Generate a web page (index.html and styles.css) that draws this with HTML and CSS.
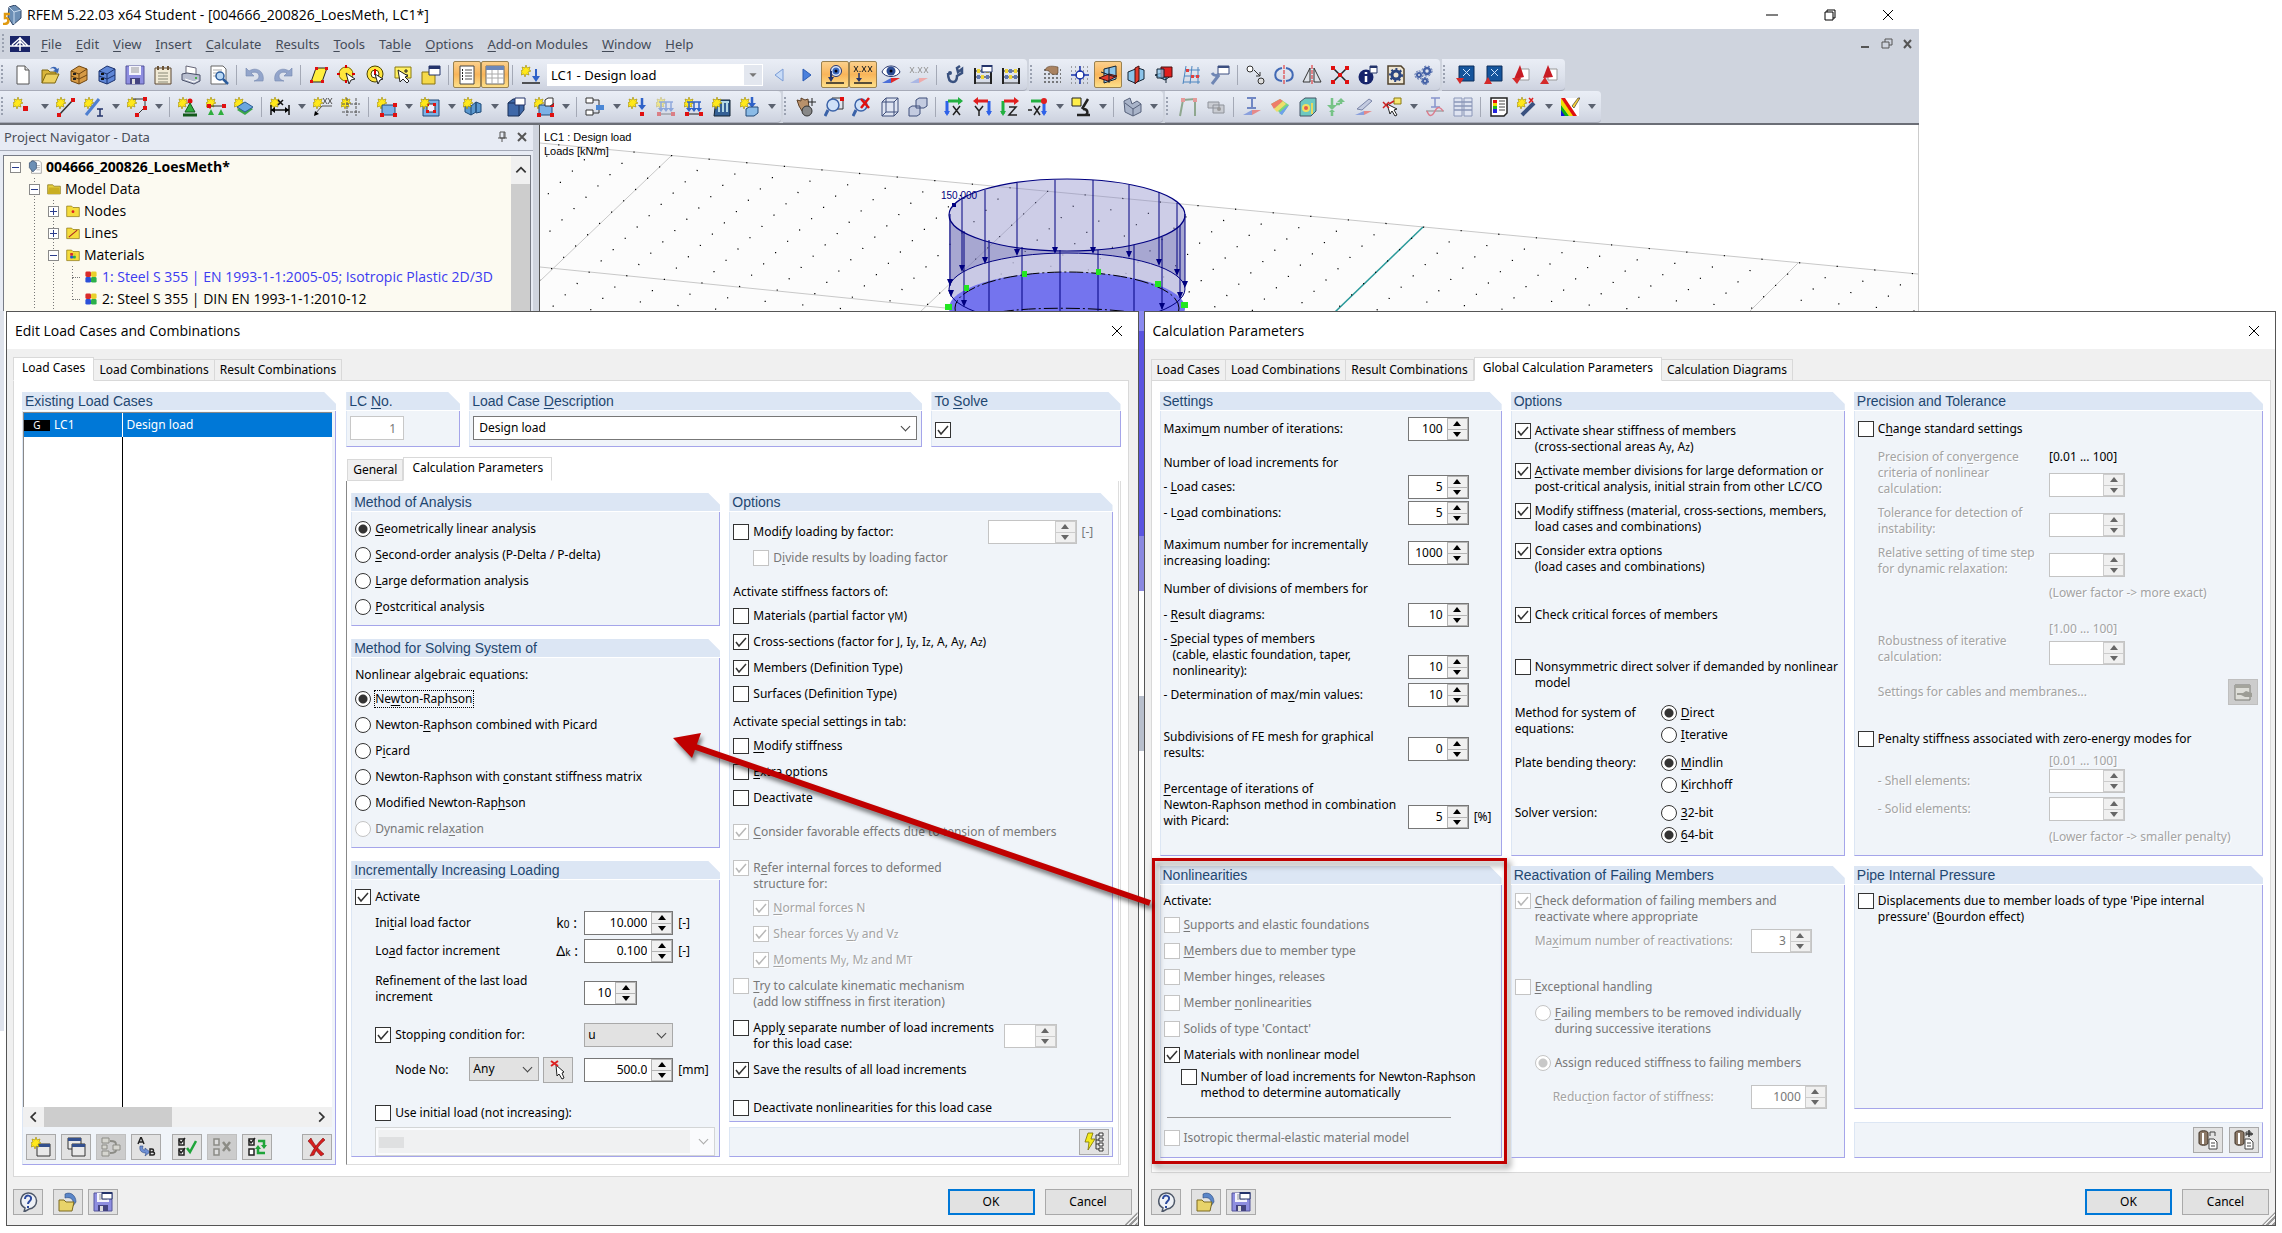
FILE: index.html
```html
<!DOCTYPE html>
<html lang="en">
<head>
<meta charset="utf-8">
<title>RFEM 5.22.03 x64 Student</title>
<link rel="stylesheet" href="styles.css">
</head>
<body>
<svg class="defs" aria-hidden="true">
<symbol id="new" viewBox="0 0 20 20"><path d="M4 1h8l4 4v14H4z" fill="#fff" stroke="#555"/><path d="M12 1v4h4" fill="#ddd" stroke="#555"/></symbol>
<symbol id="open" viewBox="0 0 20 20"><path d="M1 18V5h6l2 2h6v3" fill="#d9b53a" stroke="#7c6410"/><path d="M1 18L5 9h13l-4 9z" fill="#ecd060" stroke="#7c6410"/><path d="M9 4c2-3 6-3 7 0l2-1-1 5-5-2 2-1c-1-2-3-2-5-1z" fill="#3b67b5"/></symbol>
<symbol id="boxo" viewBox="0 0 20 20"><path d="M2 6l8-5 8 3v11l-8 4-8-3z" fill="#d69a45" stroke="#6e4510"/><path d="M2 6l8 3v10M10 9l8-5M2 11l8 3 8-4" fill="none" stroke="#6e4510"/><path d="M4 8h3v2H4zM4 13h3v2H4z" fill="#222"/></symbol>
<symbol id="boxb" viewBox="0 0 20 20"><path d="M2 6l8-5 8 3v11l-8 4-8-3z" fill="#5f86d6" stroke="#1b326e"/><path d="M2 6l8 3v10M10 9l8-5M2 11l8 3 8-4" fill="none" stroke="#1b326e"/><path d="M4 8h3v2H4zM4 13h3v2H4z" fill="#111"/></symbol>
<symbol id="save" viewBox="0 0 20 20"><path d="M1 1h18v18H1z" fill="#8e8ee0" stroke="#55559a"/><path d="M4 1h12v9H4z" fill="#f4f4fc"/><path d="M6 3h8M6 5h8M6 7h8" stroke="#999"/><path d="M5 13h10v6H5z" fill="#444480"/><path d="M7 14h3v5H7z" fill="#ddd"/></symbol>
<symbol id="clip" viewBox="0 0 20 20"><path d="M2 3h16v16H2z" fill="#f1ead6" stroke="#5b4630"/><path d="M4 1h2v4H4zM9 1h2v4H9zM14 1h2v4h-2z" fill="#6b5336"/><path d="M5 8h10M5 11h10M5 14h10M5 17h10" stroke="#887"/></symbol>
<symbol id="print" viewBox="0 0 20 20"><path d="M5 1l10 2v7H5z" fill="#fff" stroke="#667"/><path d="M1 9l5-1 13 2v6l-6 3-12-4z" fill="#b9bfd0" stroke="#4a5068"/><path d="M4 14l9 3 4-2" fill="none" stroke="#fff"/><circle cx="15" cy="13" r="1" fill="#2a2"/></symbol>
<symbol id="prev" viewBox="0 0 20 20"><path d="M2 1h12l3 3v15H2z" fill="#fff" stroke="#666"/><path d="M4 5h9M4 8h5M4 11h4" stroke="#aaa"/><circle cx="11" cy="11" r="4" fill="#b9d8f5" stroke="#2b5c9c" stroke-width="1.5"/><path d="M14 14l5 5" stroke="#2b5c9c" stroke-width="2.5"/></symbol>
<symbol id="undo" viewBox="0 0 20 20"><path d="M1 3v8h8L6 8c4-2 8 0 8 3 0 3-2 4-5 5h9c2-9-6-15-14-10z" fill="#93a5cb" stroke="#7486ae" stroke-width=".6"/></symbol>
<symbol id="redo" viewBox="0 0 20 20"><path d="M19 3v8h-8l3-3c-4-2-8 0-8 3 0 3 2 4 5 5H2C0 7 8 1 16 6z" fill="#93a5cb" stroke="#7486ae" stroke-width=".6"/></symbol>
<symbol id="rhomb" viewBox="0 0 20 20"><path d="M7 3h11l-5 14H2z" fill="#ffef3d" stroke="#222"/><path d="M6 2h3v3H6zM16 2h3v3h-3zM12 15h3v3h-3zM1 15h3v3H1z" fill="#e01010"/></symbol>
<symbol id="circ" viewBox="0 0 20 20"><circle cx="9" cy="9" r="7" fill="#ffe63d" stroke="#7a6b00"/><path d="M9 0v3M9 15v3M0 9h3M15 9h3" stroke="#d00" stroke-width="2"/><path d="M9 8l3 11 2-4 4-1z" fill="#fff" stroke="#222"/></symbol>
<symbol id="ring" viewBox="0 0 20 20"><circle cx="10" cy="9" r="8" fill="#ffe63d" stroke="#4a4200"/><circle cx="10" cy="9" r="4" fill="#fff" stroke="#4a4200"/><path d="M10 4v6" stroke="#d00" stroke-width="2"/><path d="M10 9l3 10 2-4 3-1z" fill="#fff" stroke="#222"/></symbol>
<symbol id="sel" viewBox="0 0 20 20"><path d="M2 2h16v11H2z" fill="#fff063" stroke="#8a7a10"/><path d="M13 4v4M11 6h4M11 10h4" stroke="#222"/><path d="M5 5l2 12 3-3 4 4 2-2-4-4 3-1z" fill="#fff" stroke="#222"/></symbol>
<symbol id="note" viewBox="0 0 20 20"><path d="M1 7h13v12H1z" fill="#f5d94a" stroke="#8a7410"/><path d="M8 1h11v9H8z" fill="#fff" stroke="#24346b"/><path d="M8 1h11v3H8z" fill="#24346b"/></symbol>
<symbol id="list" viewBox="0 0 20 20"><path d="M3 1h14v18H3z" fill="#fff" stroke="#444"/><path d="M5 5h1M5 8h1M5 11h1M5 14h1" stroke="#222" stroke-width="2"/><path d="M8 5h7M8 8h7M8 11h7M8 14h7" stroke="#555"/></symbol>
<symbol id="table" viewBox="0 0 20 20"><path d="M1 1h18v18H1z" fill="#fff" stroke="#666"/><path d="M1 1h18v4H1z" fill="#6b87b9"/><path d="M1 9h18M1 13h18M7 5v14M13 5v14" stroke="#aaa"/></symbol>
<symbol id="star" viewBox="0 0 20 20"><path d="M5 0l1 3 3-1-1 3 2 1-3 1 1 3-3-1-1 3-1-3-3 1 1-3-2-1 3-1-1-3 3 1z" fill="#ffe81a" stroke="#a08a00" stroke-width=".6"/></symbol>
<symbol id="sload" viewBox="0 0 20 20"><use href="#star"/><path d="M15 4v9" stroke="#2f62c8" stroke-width="2"/><path d="M11 11h8l-4 6z" fill="#2f62c8"/><path d="M1 18h18" stroke="#222" stroke-width="1.5"/></symbol>
<symbol id="left" viewBox="0 0 20 20"><path d="M14 4v12L6 10z" fill="#c9dcf7" stroke="#7a9cd6"/></symbol>
<symbol id="right" viewBox="0 0 20 20"><path d="M6 4v12l8-6z" fill="#4a80dd" stroke="#2a5bb4"/></symbol>
<symbol id="eyel" viewBox="0 0 20 20"><circle cx="11" cy="6" r="5.500" fill="#dfe8fa" stroke="#24346b"/><circle cx="11" cy="6" r="3.500" fill="#3a68bf"/><circle cx="11" cy="6" r="1.500" fill="#001"/><path d="M6 6v9" stroke="#24346b" stroke-width="2"/><path d="M3 12h6l-3 5z" fill="#24346b"/><path d="M1 18h18" stroke="#222" stroke-width="1.5"/></symbol>
<symbol id="xxx" viewBox="0 0 20 20"><path d="M1 1l4 6M5 1L1 7M9 1l4 6M13 1L9 7M15 1l4 6M19 1l-4 6M7 6v1" stroke="#222" fill="none"/><path d="M6 8v7" stroke="#24346b" stroke-width="1.5"/><path d="M3 13h6l-3 4z" fill="#24346b"/><path d="M1 18h18" stroke="#222" stroke-width="1.5"/></symbol>
<symbol id="eyer" viewBox="0 0 20 20"><path d="M1 7c3-8 15-8 18 0-3 6-15 6-18 0z" fill="#fff" stroke="#24346b"/><circle cx="10" cy="6" r="4.5" fill="#2c4c94"/><circle cx="10" cy="6" r="1.5" fill="#001"/><path d="M1 18l9-5v5z" fill="#4b6fd8"/><path d="M10 13h9l-9 5z" fill="#e02a2a"/></symbol>
<symbol id="xxr" viewBox="0 0 20 20"><path d="M1 2l4 6M5 2L1 8M9 2l4 6M13 2L9 8M15 2l4 6M19 2l-4 6M7 7v1" stroke="#999" fill="none"/><path d="M1 18l9-5v5z" fill="#aab7e4"/><path d="M10 13h9l-9 5z" fill="#eeaaaa"/></symbol>
<symbol id="wrench" viewBox="0 0 20 20"><path d="M3 8c0 6 2 9 5 9s4-3 4-6l5-3V4l-4 3-1-4 3-2" fill="none" stroke="#39517f" stroke-width="2.5"/><circle cx="5" cy="8" r="2" fill="#39517f"/></symbol>
<symbol id="abac" viewBox="0 0 20 20"><path d="M2 3v16M18 3v16" stroke="#222" stroke-width="2"/><path d="M2 6h16M2 12h16M2 18h16" stroke="#222"/><path d="M4 4h3v4H4zM13 4h3v4h-3zM8 10h3v4H8z" fill="#f0d637"/><path d="M8 4h3v4H8zM4 10h3v4H4zM13 10h3v4h-3z" fill="#6078b0"/></symbol>
<symbol id="abacw" viewBox="0 0 20 20"><use href="#abac"/><path d="M9 0h10v7H9z" fill="#fff" stroke="#24346b"/><path d="M9 0h10v2H9z" fill="#24346b"/></symbol>
<symbol id="grid" viewBox="0 0 20 20"><path d="M2 5h17M2 9h17M2 13h17M2 17h17" stroke="#555" stroke-width="1.5" stroke-dasharray="2 2"/><path d="M3 5c2-5 8-4 13-3v6c-3 3-8 1-9-2z" fill="#a98260" stroke="#5d4128" stroke-width=".6"/></symbol>
<symbol id="snap" viewBox="0 0 20 20"><path d="M1 2h18M1 6h18M1 14h18M1 18h18" stroke="#555" stroke-dasharray="1 3"/><circle cx="10" cy="10" r="4" fill="#fff" stroke="#1732a8" stroke-width="1.5"/><path d="M10 1v6M10 13v6M1 10h6M13 10h6" stroke="#1732a8" stroke-width="1.5"/></symbol>
<symbol id="plane" viewBox="0 0 20 20"><path d="M6 4l12-3v13l-12 4z" fill="#8cc4ea" stroke="#123"/><path d="M1 13l10-4 8 2-9 5z" fill="#e23b2c" stroke="#411"/><path d="M11 3v15M3 7l14 5" stroke="#123"/></symbol>
<symbol id="plane2" viewBox="0 0 20 20"><path d="M2 7l10-4 6 2v9l-9 4-7-3z" fill="#8cc4ea" stroke="#123"/><path d="M9 3l4-2v14l-4 4z" fill="#e23b2c" stroke="#411"/></symbol>
<symbol id="plane3" viewBox="0 0 20 20"><path d="M1 10l7-2 10 2-7 5z" fill="#8cc4ea" stroke="#123"/><path d="M7 2h11v10H7z" fill="#e01f1f" stroke="#411"/><path d="M12 12v6M3 4h7v9H3z" stroke="#123" fill="#8cc4ea" fill-opacity=".7"/></symbol>
<symbol id="bgrid" viewBox="0 0 20 20"><path d="M4 1L1 19M10 1L8 19M16 2v17M3 5h15M2 11h16M1 17h17" stroke="#4d86c0" fill="none"/><path d="M9 10h3v3H9zM4 4h3v3H4zM14 10h3v3h-3z" fill="#e04040"/></symbol>
<symbol id="tool" viewBox="0 0 20 20"><path d="M8 1h11v8H8z" fill="#fff" stroke="#3c4f80"/><path d="M8 1h11v2H8z" fill="#3c4f80"/><path d="M2 19l7-9M2 8c2 3 5 3 7 1" stroke="#6f86b4" stroke-width="3" fill="none"/></symbol>
<symbol id="nodes" viewBox="0 0 20 20"><circle cx="4" cy="4" r="3" fill="#fff" stroke="#333"/><circle cx="15" cy="16" r="3" fill="#ddd" stroke="#333"/><path d="M8 5l6 6M14 7v4h-4" stroke="#333" fill="none"/></symbol>
<symbol id="rot" viewBox="0 0 20 20"><path d="M8 3c-9 2-9 12 0 13M12 3c9 2 9 12 0 13" fill="none" stroke="#4169b5" stroke-width="2"/><path d="M10 0v20" stroke="#e02020" stroke-dasharray="4 1"/></symbol>
<symbol id="mirror" viewBox="0 0 20 20"><path d="M8 3v14H1zM12 3v14h7z" fill="#dfe3ea" stroke="#333"/><path d="M10 0v20" stroke="#e02020" stroke-dasharray="4 1"/></symbol>
<symbol id="cross" viewBox="0 0 20 20"><path d="M3 3l14 14M17 3L3 17" stroke="#222" stroke-width="1.5"/><path d="M1 1h4v4H1zM15 1h4v4h-4zM1 15h4v4H1zM15 15h4v4h-4zM8 8h4v4H8z" fill="#e01010"/></symbol>
<symbol id="info" viewBox="0 0 20 20"><circle cx="8" cy="12" r="7.5" fill="#16246b"/><path d="M8 7v2M8 11v6" stroke="#fff" stroke-width="2.5"/><path d="M12 1h7v7h-7z" fill="#fff" stroke="#24346b"/><path d="M12 1h7v2h-7z" fill="#24346b"/></symbol>
<symbol id="gearp" viewBox="0 0 20 20"><path d="M2 1h13l3 3v15H2z" fill="#efe6d2" stroke="#4f412c" stroke-width="1.5"/><circle cx="10" cy="10" r="4" fill="none" stroke="#2b4580" stroke-width="3"/><circle cx="10" cy="10" r="6" fill="none" stroke="#2b4580" stroke-width="2" stroke-dasharray="2 2.5"/></symbol>
<symbol id="gears" viewBox="0 0 20 20"><g fill="none" stroke="#4461a6"><circle cx="13" cy="6" r="3" stroke-width="2.5"/><circle cx="13" cy="6" r="5" stroke-dasharray="2 2"/><circle cx="5" cy="10" r="2" stroke-width="2"/><circle cx="5" cy="10" r="4" stroke-dasharray="2 1"/><circle cx="11" cy="16" r="2" stroke-width="2"/><circle cx="11" cy="16" r="3.5" stroke-dasharray="2 1"/></g></symbol>
<symbol id="bluex" viewBox="0 0 20 20"><path d="M4 1h15v15H4z" fill="#15559c" stroke="#0c2f5c"/><path d="M8 4l7 7M15 4l-7 7" stroke="#cfe4ff"/><path d="M1 13h8l-4 6z" fill="#d42a2a"/></symbol>
<symbol id="bluey" viewBox="0 0 20 20"><path d="M4 1h15v15H4z" fill="#15559c" stroke="#0c2f5c"/><path d="M8 4l7 7M15 4l-7 7" stroke="#cfe4ff"/><path d="M1 19h8l-4-7z" fill="#d42a2a"/></symbol>
<symbol id="redx" viewBox="0 0 20 20"><path d="M9 4h9v11H9z" fill="#fff" stroke="#999"/><path d="M3 14L9 0l4 12-9 2z" fill="#c81c24"/><path d="M1 13h9l-4 6z" fill="#d42a2a"/></symbol>
<symbol id="redy" viewBox="0 0 20 20"><path d="M9 4h9v11H9z" fill="#fff" stroke="#999"/><path d="M4 13L9 0l5 12z" fill="#c81c24"/><path d="M1 19h9l-4-7z" fill="#d42a2a"/></symbol>
<symbol id="snode" viewBox="0 0 20 20"><use href="#star"/><path d="M10 9h5v5h-5z" fill="#e01010"/></symbol>
<symbol id="sline" viewBox="0 0 20 20"><use href="#star"/><path d="M3 18L17 3" stroke="#333" stroke-width="1.5"/><path d="M1 16h4v4H1zM15 1h4v4h-4z" fill="#e01010"/></symbol>
<symbol id="smemb" viewBox="0 0 20 20"><use href="#star"/><path d="M2 18L15 2" stroke="#4f7fd0" stroke-width="3"/><path d="M13 12h6M16 12v7M13 19h6" stroke="#24346b" stroke-width="1.5"/></symbol>
<symbol id="spoly" viewBox="0 0 20 20"><use href="#star"/><path d="M6 2h12v8l-8 8" fill="none" stroke="#333"/><path d="M16 0h4v4h-4zM16 9h4v4h-4zM8 16h4v4H8z" fill="#e01010"/></symbol>
<symbol id="ssup" viewBox="0 0 20 20"><use href="#star"/><circle cx="12" cy="4" r="2.5" fill="#e01010"/><path d="M12 6l5 9H7z" fill="#2fae3e" stroke="#145a1c"/><path d="M5 18h14" stroke="#145a1c" stroke-width="3"/></symbol>
<symbol id="slsup" viewBox="0 0 20 20"><use href="#star"/><path d="M3 9h15" stroke="#333"/><path d="M1 7h4v4H1zM16 7h4v4h-4z" fill="#e01010"/><path d="M5 12l3 6H2zM15 12l3 6h-6z" fill="#2fae3e"/></symbol>
<symbol id="ssurf" viewBox="0 0 20 20"><use href="#star"/><path d="M3 13l8-6 8 5-8 6z" fill="#3aa648"/><path d="M3 10l8-5 8 5-8 5z" fill="#6ba6de" stroke="#2c5f96"/></symbol>
<symbol id="dim" viewBox="0 0 20 20"><use href="#star"/><path d="M1 8v10M19 8v10M1 13h18" stroke="#111" stroke-width="1.5"/><path d="M1 13l4-3v6zM19 13l-4-3v6z"/><path d="M8 3l5 5M13 3L8 8" stroke="#111" stroke-width="1.5"/></symbol>
<symbol id="cmt" viewBox="0 0 20 20"><use href="#star"/><path d="M2 17l7-8h10M10 1l4 6M14 1l-4 6M15 1l4 6M19 1l-4 6" stroke="#555" fill="none"/><path d="M1 19l1-5 4 3z"/></symbol>
<symbol id="hash" viewBox="0 0 20 20"><use href="#star"/><path d="M6 1v18M15 1v18M1 7h18M1 15h18" stroke="#555" stroke-dasharray="3 1"/></symbol>
<symbol id="srect" viewBox="0 0 20 20"><use href="#star"/><path d="M5 8h13v10H5z" fill="#7db2e6" stroke="#234a78"/><path d="M3 16h4v4H3zM16 16h4v4h-4zM16 6h4v4h-4z" fill="#e01010"/></symbol>
<symbol id="sopen" viewBox="0 0 20 20"><path d="M3 3h16v16H3z" fill="#7db2e6" stroke="#234a78"/><path d="M7 7h8v8H7z" fill="#eef" stroke="#333"/><path d="M6 6h3v3H6zM13 6h3v3h-3zM6 13h3v3H6zM13 13h3v3h-3z" fill="#e01010"/><use href="#star"/></symbol>
<symbol id="scyl" viewBox="0 0 20 20"><path d="M2 7l6 2v9l-6-3zM8 9l5-4v10l-5 3M13 5l5 2v8l-5 1z" fill="#5b98cf" stroke="#1f4b78"/><use href="#star"/></symbol>
<symbol id="cube" viewBox="0 0 20 20"><path d="M2 6l5-4h11v11l-5 6H2z" fill="#3f68a8" stroke="#182f57"/><path d="M2 6h11v13M13 6l5-4" fill="none" stroke="#182f57"/><path d="M9 1h10v7H9z" fill="#fff" stroke="#24346b"/></symbol>
<symbol id="cubes" viewBox="0 0 20 20"><use href="#srect"/><path d="M11 3l3-2h5v6l-3 2h-5z" fill="#fff" stroke="#333"/></symbol>
<symbol id="flow" viewBox="0 0 20 20"><path d="M1 1h7v5H1zM1 13h7v5H1z" fill="#fff" stroke="#333"/><path d="M8 3h6v5M8 16h6v-4" fill="none" stroke="#333"/><path d="M11 8h8v5h-8z" fill="#4a87d6"/></symbol>
<symbol id="nload" viewBox="0 0 20 20"><use href="#star"/><path d="M14 1v9" stroke="#2f62c8" stroke-width="2.5"/><path d="M10 8h8l-4 5z" fill="#2f62c8"/><path d="M12 15h4v4h-4z" fill="#e01010"/></symbol>
<symbol id="mload" viewBox="0 0 20 20"><use href="#star"/><path d="M3 5h14M5 5v7M10 5v7M15 5v7" stroke="#2f62c8" stroke-width="1.5"/><path d="M2 11h6l-3 4zM7 11h6l-3 4zM12 11h6l-3 4z" fill="#2f62c8"/><path d="M2 17h16" stroke="#222"/><path d="M1 15h4v4H1zM15 15h4v4h-4z" fill="#e01010"/></symbol>
<symbol id="sload2" viewBox="0 0 20 20"><path d="M4 3h14v16H2z" fill="#356196" stroke="#123"/><path d="M7 6v9M11 6v9M15 6v9M5 5h12" stroke="#dff" stroke-width="1.5"/><use href="#star"/></symbol>
<symbol id="vload" viewBox="0 0 20 20"><use href="#star"/><path d="M12 0v7" stroke="#2f62c8" stroke-width="2.5"/><path d="M8 6h8l-4 5z" fill="#2f62c8"/><path d="M6 12l3-2h9v6l-4 3H6z" fill="#8bbbe6" stroke="#234a78"/></symbol>
<symbol id="hand" viewBox="0 0 20 20"><path d="M3 9l-2-6 4 1V1l4 2 3-1 1 9-3 3H6z" fill="#b9916b" stroke="#5d4128"/><circle cx="11" cy="14" r="5" fill="#888" stroke="#333"/><path d="M16 1v8M12 5h8" stroke="#222"/></symbol>
<symbol id="zoomw" viewBox="0 0 20 20"><path d="M8 1h11v11H8z" fill="none" stroke="#333"/><circle cx="9" cy="8" r="6" fill="#cfe1f8" stroke="#3a62a8" stroke-width="1.5"/><path d="M4 13l-3 6" stroke="#3a62a8" stroke-width="3"/><path d="M16 0h4v4h-4z" fill="#e01010"/></symbol>
<symbol id="zoomx" viewBox="0 0 20 20"><circle cx="9" cy="8" r="6" fill="#cfe1f8" stroke="#3a62a8" stroke-width="1.5"/><path d="M4 13l-3 6" stroke="#3a62a8" stroke-width="3"/><path d="M9 2l8 9M17 1l-8 10" stroke="#e01010" stroke-width="2.5"/></symbol>
<symbol id="wire" viewBox="0 0 20 20"><path d="M2 5l4-4h12v14l-4 4H2z" fill="#dfe5f2" stroke="#3f4f7a"/><path d="M2 5h12v14M14 5l4-4M6 1v14h12M2 19l4-4" fill="none" stroke="#3f4f7a"/></symbol>
<symbol id="wire2" viewBox="0 0 20 20"><path d="M8 3l3-2h8v8l-3 2H8zM1 11l3-2h8v8l-3 2H1z" fill="#c3cbe0" stroke="#3f4f7a"/></symbol>
<symbol id="vx" viewBox="0 0 20 20"><path d="M3 4v13" stroke="#2f62e8" stroke-width="3"/><path d="M4 4h13" stroke="#22b040" stroke-width="3"/><path d="M14 0l5 4-5 4z" fill="#22b040"/><path d="M0 14h6l-3 5z" fill="#2f62e8"/><path d="M9 9l7 9M16 9l-7 9" stroke="#222" stroke-width="1.5"/></symbol>
<symbol id="vy" viewBox="0 0 20 20"><path d="M17 4v13" stroke="#2f62e8" stroke-width="3"/><path d="M3 4h13" stroke="#e01f1f" stroke-width="3"/><path d="M6 0L1 4l5 4z" fill="#e01f1f"/><path d="M14 14h6l-3 5z" fill="#2f62e8"/><path d="M3 9l4 5 4-5M7 14v5" stroke="#222" stroke-width="1.5" fill="none"/></symbol>
<symbol id="vz" viewBox="0 0 20 20"><path d="M3 4v13" stroke="#22b040" stroke-width="3"/><path d="M4 4h13" stroke="#e01f1f" stroke-width="3"/><path d="M14 0l5 4-5 4z" fill="#e01f1f"/><path d="M0 14h6l-3 5z" fill="#22b040"/><path d="M9 10h7l-7 8h8" stroke="#222" stroke-width="1.5" fill="none"/></symbol>
<symbol id="vmx" viewBox="0 0 20 20"><path d="M16 4v13" stroke="#2f62e8" stroke-width="3"/><path d="M3 4h12" stroke="#22b040" stroke-width="3"/><path d="M13 14h6l-3 5z" fill="#2f62e8"/><circle cx="16" cy="4" r="3" fill="#e01f1f"/><path d="M6 9l6 9M12 9l-6 9M0 13h4" stroke="#222" stroke-width="1.5"/></symbol>
<symbol id="mic" viewBox="0 0 20 20"><path d="M1 1h9v8H1z" fill="#ffee4a" stroke="#222"/><path d="M17 2l-6 10M6 18h13M12 12c6 0 5 6 2 6" stroke="#222" stroke-width="2.5" fill="none"/></symbol>
<symbol id="solid" viewBox="0 0 20 20"><path d="M2 4l6-3 2 6 5-3 4 3v8l-8 4-8-4z" fill="#a9b4c9" stroke="#56617a"/><path d="M3 6l8 6v7M11 12l8-5" fill="none" stroke="#56617a"/></symbol>
<symbol id="frame" viewBox="0 0 20 20"><path d="M2 19L5 3l12-1v17" fill="none" stroke="#8fa78f" stroke-width="2"/><path d="M3 1h4v4H3zM15 1h4v4h-4z" fill="#e59a9a"/></symbol>
<symbol id="camera" viewBox="0 0 20 20"><path d="M2 5h11v6H2zM7 8h11v8H7z" fill="#c9ccd2" stroke="#8e929a"/><circle cx="13" cy="12" r="2" fill="#999"/></symbol>
<symbol id="ires" viewBox="0 0 20 20"><path d="M5 1h9M10 1v10M5 11h9" stroke="#7087c4" stroke-width="2"/><path d="M1 18l9-5v5z" fill="#8aa0dd"/><path d="M10 13h9l-9 5z" fill="#e58a8a"/></symbol>
<symbol id="rain" viewBox="0 0 20 20"><path d="M1 7l9-5 9 6-7 10z" fill="#79d67c"/><path d="M1 7l9-5 3 2-9 8z" fill="#ef7c68"/><path d="M4 12l9-8 3 3-9 8z" fill="#eede6a"/><path d="M9 16l8-7 2-1-7 10z" fill="#6da0ee"/></symbol>
<symbol id="rcube" viewBox="0 0 20 20"><path d="M2 5l5-4h11v13l-5 5H2z" fill="#6ec9c0" stroke="#456"/><circle cx="8" cy="11" r="4" fill="#f0e060"/><circle cx="8" cy="11" r="2" fill="#e75b4a"/><path d="M14 6v11" stroke="#e8d860" stroke-width="2"/></symbol>
<symbol id="garr" viewBox="0 0 20 20"><path d="M6 1v10M15 4v3M10 7h4M6 14v5" stroke="#76c386" stroke-width="2.5"/><path d="M1 8h10l-5 5zM11 5h8l-4-4zM3 15h6l-3-3z" fill="#76c386"/></symbol>
<symbol id="brush" viewBox="0 0 20 20"><path d="M3 12L15 2l3 2L8 13z" fill="#c3cbe0" stroke="#7b86a8"/><path d="M1 18l9-4v4z" fill="#8aa0dd"/><path d="M10 14h8l-8 4z" fill="#e58a8a"/></symbol>
<symbol id="pick" viewBox="0 0 20 20"><path d="M12 1h7v6h-7z" fill="#f7e670" stroke="#8a7a10"/><path d="M5 7l3 10 2-3 3 5 2-1-3-5 3-1z" fill="#fff" stroke="#222"/><path d="M1 5l6 6M7 5l-6 6M7 7l5-3" stroke="#c22" stroke-width="1.5"/></symbol>
<symbol id="wave" viewBox="0 0 20 20"><path d="M6 1h9M10 1v9M6 10h9" stroke="#8794cc" stroke-width="1.5"/><path d="M1 14h18" stroke="#888"/><path d="M2 14c2 6 5 6 8 0s6-3 8 0" stroke="#dc7d8d" fill="none" stroke-width="1.5"/></symbol>
<symbol id="cols" viewBox="0 0 20 20"><path d="M1 1h8v18H1zM11 1h8v18h-8z" fill="#dfe4f1" stroke="#8a96b8"/><path d="M1 5h18M1 9h18M1 13h18" stroke="#8a96b8" stroke-width="1.5"/></symbol>
<symbol id="legend" viewBox="0 0 20 20"><path d="M2 1h16v15l-3 3H2z" fill="#fff" stroke="#222" stroke-width="1.5"/><path d="M4 3h4v3H4z" fill="#e01010"/><path d="M4 6h4v3H4z" fill="#ed0"/><path d="M4 9h4v3H4z" fill="#2b2"/><path d="M4 12h4v4H4z" fill="#22d"/><path d="M10 4h6M10 7h6M10 10h6M10 13h6" stroke="#444"/></symbol>
<symbol id="sbrush" viewBox="0 0 20 20"><use href="#star"/><path d="M5 18L17 6" stroke="#39517f" stroke-width="4"/><path d="M12 1l4 4M16 1l-4 5" stroke="#d22" stroke-width="1.5"/></symbol>
<symbol id="kcol" viewBox="0 0 20 20"><path d="M1 1h18v18H1z" fill="#fff"/><path d="M1 1l13 18H9L1 8z" fill="#ed0"/><path d="M1 8l8 11H1z" fill="#1a1"/><path d="M1 13l4 6H1z" fill="#11d"/><path d="M1 1h4l12 18h-4z" fill="#e01010"/><path d="M12 9l6-8h2l-6 10z" fill="#f6d03a" stroke="#222" stroke-width=".6"/></symbol>
<symbol id="win" viewBox="0 0 20 20"><path d="M6 7h13v12H6z" fill="#e9e9e9" stroke="#333"/><path d="M6 7h13v3H6z" fill="#33508e"/></symbol>
<symbol id="swin" viewBox="0 0 20 20"><use href="#win"/><use href="#star"/></symbol>
<symbol id="wins" viewBox="0 0 20 20"><path d="M2 1h13v11H2z" fill="#e9e9e9" stroke="#333"/><path d="M2 1h13v3H2z" fill="#33508e"/><use href="#win"/></symbol>
<symbol id="gflow" viewBox="0 0 20 20"><path d="M1 1h7v5H1zM1 14h7v5H1zM12 8h7v5h-7zM1 8h5v4H1z" fill="#d6d6d0" stroke="#8c8c86"/><path d="M9 4c5 0 6 1 6 4M9 16c5 0 6-1 6-3" stroke="#8c8c86" fill="none" stroke-width="2"/></symbol>
<symbol id="ab" viewBox="0 0 20 20"><path d="M2 7l3-7 3 7M3 5h4" stroke="#222" fill="none" stroke-width="1.5"/><path d="M4 9c-1 5 2 7 6 7l-1 3 5-4-5-4v2c-2 0-3-1-2-4z" fill="#6f90d4" stroke="#2d4a86" stroke-width=".6"/><path d="M14 12v6h3a1 1 0 0 0 0-3h-3 2a1 1 0 0 0 0-3z" fill="none" stroke="#222" stroke-width="1.5"/></symbol>
<symbol id="chk" viewBox="0 0 20 20"><path d="M2 2h5v6H2zM2 12h5v6H2z" fill="#fff" stroke="#222" stroke-width="1.5"/><path d="M2 3l2 3 4-5M2 13l2 3 4-5" fill="none" stroke="#222" stroke-width="1.5"/><path d="M10 11l3 4 6-11" fill="none" stroke="#1fa53a" stroke-width="2.5"/></symbol>
<symbol id="unchk" viewBox="0 0 20 20"><path d="M2 2h5v6H2zM2 12h5v6H2z" fill="#ddd" stroke="#8c8c86" stroke-width="1.5"/><path d="M11 5l7 9M18 5l-7 9" stroke="#8c8c86" stroke-width="2.5"/></symbol>
<symbol id="inv" viewBox="0 0 20 20"><path d="M2 2h5v6H2zM2 12h5v6H2z" fill="#fff" stroke="#222" stroke-width="1.5"/><path d="M2 3l2 3 4-5" fill="none" stroke="#222" stroke-width="1.5"/><path d="M11 4h6v4M18 16h-7v-4" fill="none" stroke="#1fa53a" stroke-width="2.5"/><path d="M14 8h6l-3 4zM8 12h6l-3-4z" fill="#1fa53a"/></symbol>
<symbol id="del" viewBox="0 0 20 20"><path d="M4 1c2 5 8 12 13 16l-3 2C9 14 5 8 1 4z" fill="#d81e1e" stroke="#7a0d0d" stroke-width=".6"/><path d="M16 1C11 6 6 12 3 19l4-1c2-6 6-11 11-15z" fill="#d81e1e" stroke="#7a0d0d" stroke-width=".6"/></symbol>
<symbol id="help" viewBox="0 0 20 20"><path d="M10 1a8 8 0 0 1 1 16l-5 3 1-4a8 8 0 0 1 3-15z" fill="#eef1f6" stroke="#4d5768" stroke-width="1.5"/><path d="M7 7c0-5 7-4 6 0 0 2-3 2-3 5M10 14v2" fill="none" stroke="#2c4a9e" stroke-width="2"/></symbol>
<symbol id="fold" viewBox="0 0 20 20"><path d="M7 2c6-3 11 2 11 8l-3 4V9c-1-3-4-4-8-3z" fill="#5b86c8" stroke="#2b4a80" stroke-width=".6"/><path d="M1 8h5l2 2h8l-2 9H1z" fill="#e8d36a" stroke="#7c6a20"/></symbol>
<symbol id="savew" viewBox="0 0 20 20"><use href="#save"/><path d="M9 0h10v7H9z" fill="#fff" stroke="#24346b"/><path d="M9 0h10v2H9z" fill="#24346b"/></symbol>
<symbol id="curs" viewBox="0 0 20 20"><path d="M8 5l1 11 2-2 3 5 2-1-2-5 2-1z" fill="#fff" stroke="#222"/><path d="M3 1l7 5M10 1L3 6" stroke="#d22" stroke-width="2"/></symbol>
<symbol id="bolt" viewBox="0 0 20 20"><path d="M4 1h5L7 7h4L4 18l1-8H1z" fill="#f4ea1c" stroke="#7c7400" stroke-width=".8"/><path d="M12 3v14M12 3h3M12 8h3M12 12h3M12 17h3" stroke="#333"/><path d="M15 1h4v3h-4zM15 6h4v3h-4zM15 11h4v3h-4zM15 16h4v3h-4z" fill="#fff" stroke="#333"/></symbol>
<symbol id="gset" viewBox="0 0 20 20"><path d="M2 3h15v15H2z" fill="#deded8" stroke="#7d7d76"/><path d="M2 3h15v3H2z" fill="#a5a59d"/><path d="M4 11h6l3-2 6 2v4h-7l-4-2H4z" fill="#9d9d95"/></symbol>
<symbol id="db1" viewBox="0 0 20 20"><path d="M1 3c0-3 9-3 9 0v10c0 3-9 3-9 0z" fill="#8d7a68" stroke="#3d3024"/><path d="M5 3v11" stroke="#fff" stroke-width="2"/><path d="M11 9h5l3 3v7h-8z" fill="#fff" stroke="#444"/><path d="M13 13h4M13 16h4M12 6V2h5v4" stroke="#444" fill="none"/></symbol>
<symbol id="db2" viewBox="0 0 20 20"><use href="#db1"/><path d="M15 0v7M12 4h7" stroke="#333" stroke-width="1.5"/></symbol>
<symbol id="logo" viewBox="0 0 20 20"><path d="M7 2l6-2 6 5v8l-8 7-5-8z" fill="#6c8fb5" stroke="#33496a"/><path d="M7 2l5 5 7-2M12 7v12" stroke="#c8dbef" fill="none"/><path d="M8 9H3v4c4-1 5 5 0 6H1" stroke="#e09a10" stroke-width="2.5" fill="none"/></symbol>
<symbol id="bridge" viewBox="0 0 20 20"><path d="M0 2h20v16H0z" fill="#1a2568"/><path d="M10 3v14M0 12h20M10 4L2 11M10 4l8 8M10 7l-5 5M10 7l5 5" stroke="#fff" stroke-width="1.5" fill="none"/></symbol>
<symbol id="doc" viewBox="0 0 20 20"><path d="M5 1h11l3 3v15H5z" fill="#fff" stroke="#888"/><path d="M12 8h5M12 11h5M12 14h5" stroke="#999"/><path d="M2 4l5-3 5 3v8l-5 5-5-6z" fill="#6c8fb5" stroke="#33496a"/></symbol>
<symbol id="fy" viewBox="0 0 20 20"><path d="M1 4h7l2 2h9v11H1z" fill="#e5cf3f" stroke="#7c6a10"/><path d="M1 17L3 8h14l2 9z" fill="#c9ae22"/></symbol>
<symbol id="fsq" viewBox="0 0 20 20"><path d="M1 3h7l2 2h9v13H1z" fill="#f5dc3c" stroke="#8a7410"/></symbol>
<symbol id="fnode" viewBox="0 0 20 20"><use href="#fsq"/><circle cx="10" cy="11" r="2" fill="#d22"/></symbol>
<symbol id="fline" viewBox="0 0 20 20"><use href="#fsq"/><path d="M4 16L16 6" stroke="#a22" stroke-width="1.5"/></symbol>
<symbol id="mat" viewBox="0 0 20 20"><rect x="2" y="2" width="8" height="8" rx="2" fill="#d92b2b"/><rect x="10" y="2" width="8" height="8" rx="2" fill="#e9cf2b"/><rect x="2" y="10" width="8" height="8" rx="2" fill="#2b4fd9"/><rect x="10" y="10" width="8" height="8" rx="2" fill="#2bb04a"/></symbol>
<symbol id="fmat" viewBox="0 0 20 20"><use href="#fsq"/><use href="#mat" x="5" y="6" width="10" height="10"/></symbol>
<symbol id="x" viewBox="0 0 12 12"><path d="M1 1l10 10M11 1L1 11" stroke="currentColor" fill="none"/></symbol>
</svg>

<main class="desktop">
<section class="app">
  <header class="appbar">
    <svg class="ic"><use href="#logo"/></svg><span class="apptitle">RFEM 5.22.03 x64 Student - [004666_200826_LoesMeth, LC1*]</span>
    <span class="sys"><button aria-label="Minimize"><svg viewBox="0 0 12 12"><path d="M0 6h12" stroke="#000"/></svg></button><button aria-label="Restore"><svg viewBox="0 0 12 12"><path d="M1 3h8v8H1zM3 3V1h8v8H9" fill="none" stroke="#000"/></svg></button><button aria-label="Close"><svg><use href="#x"/></svg></button></span>
  </header>
  <nav class="menu">
    <i class="grip"></i><svg class="ic"><use href="#bridge"/></svg>
    <a href="#"><u>F</u>ile</a><a href="#"><u>E</u>dit</a><a href="#"><u>V</u>iew</a><a href="#"><u>I</u>nsert</a><a href="#"><u>C</u>alculate</a><a href="#"><u>R</u>esults</a><a href="#"><u>T</u>ools</a><a href="#">Ta<u>b</u>le</a><a href="#"><u>O</u>ptions</a><a href="#"><u>A</u>dd-on Modules</a><a href="#"><u>W</u>indow</a><a href="#"><u>H</u>elp</a>
    <span class="mdi"><svg viewBox="0 0 12 12"><path d="M1 9h8" stroke="#555" stroke-width="2"/></svg><svg viewBox="0 0 12 12"><path d="M1 4h7v6H1zM4 4V1h7v6H8" fill="none" stroke="#555"/></svg><svg viewBox="0 0 12 12"><path d="M2 2l7 8M9 2l-7 8" stroke="#555" stroke-width="2"/></svg></span>
  </nav>
  <div class="bars">
  <div class="bar">
    <div class="seg"><i class="grip"></i>
      <button class="ib"><svg><use href="#new"/></svg></button><button class="ib"><svg><use href="#open"/></svg></button><button class="ib"><svg><use href="#boxo"/></svg></button><button class="ib"><svg><use href="#boxb"/></svg></button><button class="ib"><svg><use href="#save"/></svg></button><button class="ib"><svg><use href="#clip"/></svg></button><button class="ib"><svg><use href="#print"/></svg></button><button class="ib"><svg><use href="#prev"/></svg></button><i class="sep"></i><button class="ib"><svg><use href="#undo"/></svg></button><button class="ib"><svg><use href="#redo"/></svg></button><i class="sep"></i><button class="ib"><svg><use href="#rhomb"/></svg></button><button class="ib"><svg><use href="#circ"/></svg></button><button class="ib"><svg><use href="#ring"/></svg></button><button class="ib"><svg><use href="#sel"/></svg></button><button class="ib"><svg><use href="#note"/></svg></button><i class="sep"></i><button class="ib on"><svg><use href="#list"/></svg></button><button class="ib on"><svg><use href="#table"/></svg></button><i class="sep"></i><button class="ib"><svg><use href="#sload"/></svg></button>
      <span class="lcbox"><select aria-label="Load case"><option>LC1 - Design load</option></select></span>
      <button class="ib"><svg><use href="#left"/></svg></button><button class="ib"><svg><use href="#right"/></svg></button><button class="ib on"><svg><use href="#eyel"/></svg></button><button class="ib on"><svg><use href="#xxx"/></svg></button><button class="ib"><svg><use href="#eyer"/></svg></button><button class="ib"><svg><use href="#xxr"/></svg></button><i class="sep"></i><button class="ib"><svg><use href="#wrench"/></svg></button><button class="ib"><svg><use href="#abacw"/></svg></button><button class="ib"><svg><use href="#abac"/></svg></button>
    </div>
    <div class="seg"><i class="grip"></i>
      <button class="ib"><svg><use href="#grid"/></svg></button><button class="ib"><svg><use href="#snap"/></svg></button><button class="ib on"><svg><use href="#plane"/></svg></button><button class="ib"><svg><use href="#plane2"/></svg></button><button class="ib"><svg><use href="#plane3"/></svg></button><button class="ib"><svg><use href="#bgrid"/></svg></button><button class="ib"><svg><use href="#tool"/></svg></button><i class="sep"></i><button class="ib"><svg><use href="#nodes"/></svg></button><button class="ib"><svg><use href="#rot"/></svg></button><button class="ib"><svg><use href="#mirror"/></svg></button><button class="ib"><svg><use href="#cross"/></svg></button><button class="ib"><svg><use href="#info"/></svg></button><button class="ib"><svg><use href="#gearp"/></svg></button><button class="ib"><svg><use href="#gears"/></svg></button>
    </div>
    <div class="seg"><i class="grip"></i>
      <button class="ib"><svg><use href="#bluex"/></svg></button><button class="ib"><svg><use href="#bluey"/></svg></button><button class="ib"><svg><use href="#redx"/></svg></button><button class="ib"><svg><use href="#redy"/></svg></button>
    </div>
  </div>
  <div class="bar">
    <div class="seg"><i class="grip"></i>
      <button class="ib"><svg><use href="#snode"/></svg></button><i class="dd"></i><button class="ib"><svg><use href="#sline"/></svg></button><button class="ib"><svg><use href="#smemb"/></svg></button><i class="dd"></i><button class="ib"><svg><use href="#spoly"/></svg></button><i class="dd"></i><i class="sep"></i><button class="ib"><svg><use href="#ssup"/></svg></button><button class="ib"><svg><use href="#slsup"/></svg></button><button class="ib"><svg><use href="#ssurf"/></svg></button><i class="sep"></i><button class="ib"><svg><use href="#dim"/></svg></button><i class="dd"></i><button class="ib"><svg><use href="#cmt"/></svg></button><button class="ib"><svg><use href="#hash"/></svg></button><i class="sep"></i><button class="ib"><svg><use href="#srect"/></svg></button><i class="dd"></i><button class="ib"><svg><use href="#sopen"/></svg></button><i class="dd"></i><button class="ib"><svg><use href="#scyl"/></svg></button><i class="dd"></i><button class="ib"><svg><use href="#cube"/></svg></button><button class="ib"><svg><use href="#cubes"/></svg></button><i class="dd"></i><i class="sep"></i><button class="ib"><svg><use href="#flow"/></svg></button><i class="dd"></i><button class="ib"><svg><use href="#nload"/></svg></button><button class="ib dim"><svg><use href="#mload"/></svg></button><button class="ib"><svg><use href="#mload"/></svg></button><button class="ib"><svg><use href="#sload2"/></svg></button><button class="ib"><svg><use href="#vload"/></svg></button><i class="dd"></i>
    </div>
    <div class="seg"><i class="grip"></i>
      <button class="ib"><svg><use href="#hand"/></svg></button><button class="ib"><svg><use href="#zoomw"/></svg></button><button class="ib"><svg><use href="#zoomx"/></svg></button><button class="ib"><svg><use href="#wire"/></svg></button><button class="ib"><svg><use href="#wire2"/></svg></button><i class="sep"></i><button class="ib"><svg><use href="#vx"/></svg></button><button class="ib"><svg><use href="#vy"/></svg></button><button class="ib"><svg><use href="#vz"/></svg></button><button class="ib"><svg><use href="#vmx"/></svg></button><i class="dd"></i><button class="ib"><svg><use href="#mic"/></svg></button><i class="dd"></i><i class="sep"></i><button class="ib"><svg><use href="#solid"/></svg></button><i class="dd"></i>
    </div>
    <div class="seg"><i class="grip"></i>
      <button class="ib"><svg><use href="#frame"/></svg></button><button class="ib"><svg><use href="#camera"/></svg></button><i class="sep"></i><button class="ib"><svg><use href="#ires"/></svg></button><button class="ib"><svg><use href="#rain"/></svg></button><button class="ib"><svg><use href="#rcube"/></svg></button><button class="ib"><svg><use href="#garr"/></svg></button><button class="ib"><svg><use href="#brush"/></svg></button><button class="ib"><svg><use href="#pick"/></svg></button><i class="dd"></i><button class="ib"><svg><use href="#wave"/></svg></button><button class="ib"><svg><use href="#cols"/></svg></button><i class="sep"></i><button class="ib"><svg><use href="#legend"/></svg></button><button class="ib"><svg><use href="#sbrush"/></svg></button><i class="dd"></i><button class="ib"><svg><use href="#kcol"/></svg></button><i class="dd"></i>
    </div>
  </div>
  </div>
  <div class="work">
    <aside class="nav">
      <div class="navhead"><span>Project Navigator - Data</span><svg viewBox="0 0 12 12"><path d="M4 1h5v6H4zM2 7h9M6 7v4M8 1v6" fill="none" stroke="#555"/></svg><svg viewBox="0 0 12 12"><path d="M2 2l8 8M10 2l-8 8" stroke="#555" stroke-width="2"/></svg></div>
      <div class="treebox">
        <ul class="tree">
          <li><div><i class="ex"></i><svg><use href="#doc"/></svg><b>004666_200826_LoesMeth*</b></div>
            <ul><li><div><i class="ex"></i><svg><use href="#fy"/></svg>Model Data</div>
              <ul>
                <li><div><i class="ex plus"></i><svg><use href="#fnode"/></svg>Nodes</div></li>
                <li><div><i class="ex plus"></i><svg><use href="#fline"/></svg>Lines</div></li>
                <li><div><i class="ex"></i><svg><use href="#fmat"/></svg>Materials</div>
                  <ul><li><div><i class="twig"></i><svg><use href="#mat"/></svg><span class="cur">1: Steel S 355 | EN 1993-1-1:2005-05; Isotropic Plastic 2D/3D</span></div></li>
                  <li><div><i class="twig"></i><svg><use href="#mat"/></svg>2: Steel S 355 | DIN EN 1993-1-1:2010-12</div></li></ul>
                </li>
              </ul></li></ul>
          </li>
        </ul>
        <div class="vscroll"><svg viewBox="0 0 12 12"><path d="M2 8l4-4 4 4" fill="none" stroke="#333" stroke-width="1.5"/></svg><i></i></div>
      </div>
    </aside>
    <div class="view">
      <svg class="scene" viewBox="540 125 1378 187" preserveAspectRatio="xMinYMin slice">
        <path d="M540 143L1918 274V320H540z" fill="#fcfcfc"/>
        <g fill="none" stroke="#c8c8c8"><path d="M540 143L1918 274M540 267L985 312M671 156L540 281M1047 192L920 312M1798 263L1749 312"/><path d="M1423 227L1335 312" stroke="#2a9a9a" stroke-width="1.5"/></g>
        <defs><path id="dots" d="M483 137.7L1975 279.5" stroke="#000" stroke-width="1.2" stroke-dasharray="1.2 36.57"/></defs>
        <use href="#dots"/><use href="#dots" x="-12" y="11.3"/><use href="#dots" x="-24" y="22.6"/><use href="#dots" x="-36" y="33.9"/><use href="#dots" x="-48" y="45.2"/><use href="#dots" x="-60" y="56.5"/><use href="#dots" x="-72" y="67.8"/><use href="#dots" x="-84" y="79.1"/><use href="#dots" x="-96" y="90.4"/><use href="#dots" x="-108" y="101.7"/><use href="#dots" x="-120" y="113"/><use href="#dots" x="-132" y="124.3"/><use href="#dots" x="-144" y="135.6"/><use href="#dots" x="-156" y="146.9"/>
        <g fill="#8888c8" fill-opacity=".4"><ellipse cx="1067" cy="215" rx="118" ry="36"/><path d="M949 215v74a118 36 0 0 0 236 0v-74a118 36 0 0 1-236 0z" fill-opacity=".4"/></g>
        <path d="M949 215v74a118 36 0 0 1 236 0v-74a118 36 0 0 1-236 0z" fill="#6060a8" fill-opacity=".35"/>
        <ellipse cx="1067" cy="289" rx="118" ry="36" fill="#c8c8e4" fill-opacity=".7"/>
        <ellipse cx="1067" cy="308" rx="118" ry="36" fill="#7474ee"/>
        <ellipse cx="1067" cy="308" rx="112" ry="36" fill="none" stroke="#000" stroke-dasharray="14 3 2 3"/>
        <path d="M1000 312c30-5 90-5 130 0" fill="none" stroke="#000" stroke-dasharray="14 3 2 3"/>
        <g fill="none" stroke="#000080"><ellipse cx="1067" cy="215" rx="118" ry="36" stroke-width="1.2"/><ellipse cx="1067" cy="289" rx="118" ry="36"/>
        <path d="M950 214v72M962 199v70M985 190v71M1017 183v71M1055 180v71M1093 180v71M1129 185v71M1159 192v71M1177 203v71M1185 214v71M964 231v73M989 240v72M1022 247v65M1060 250v62M1098 250v62M1134 245v67M1162 237v72M1180 226v72"/></g>
        <path d="M947 279h6l-3 7zM959 265h6l-3 7zM982 257h6l-3 7zM1014 249h6l-3 7zM1052 247h6l-3 7zM1090 247h6l-3 7zM1126 251h6l-3 7zM1156 259h6l-3 7zM1174 269h6l-3 7zM1182 281h6l-3 7zM948 290h6l-3 7zM961 300h6l-3 7zM1159 303h6l-3 7zM1177 292h6l-3 7zM952 203h4v4h-4z" fill="#000080"/>
        <path d="M964 285h5v6h-5zM1022 271h5v6h-5zM1096 269h5v6h-5zM1155 281h6v6h-6zM945 304h7v6h-7zM1181 302h7v6h-7z" fill="#22e622"/>
        <text x="941" y="199" class="loadval">150.000</text>
      </svg>
      <p>LC1 : Design load<br>Loads [kN/m]</p>
    </div>
  </div>
</section>

<div class="dialogs">
<section class="dlg">
  <header><h1>Edit Load Cases and Combinations</h1><button aria-label="Close"><svg><use href="#x"/></svg></button></header>
  <div class="tabs"><button class="tab on">Load Cases</button><button class="tab">Load Combinations</button><button class="tab">Result Combinations</button></div>
  <div class="page lc">
    <section class="group existing"><h2>Existing Load Cases</h2>
      <div class="gb">
        <div class="lclist"><table><tr class="cur"><td class="c1"><span>G</span>LC1</td><td>Design load</td></tr><tr class="rest"><td class="c1"></td><td></td></tr></table></div>
        <div class="hscroll"><svg viewBox="0 0 12 12"><path d="M8 2L4 6l4 4" fill="none" stroke="#333" stroke-width="1.5"/></svg><i></i><svg viewBox="0 0 12 12"><path d="M4 2l4 4-4 4" fill="none" stroke="#333" stroke-width="1.5"/></svg></div>
        <div class="ltools"><button class="sb"><svg><use href="#swin"/></svg></button><button class="sb"><svg><use href="#wins"/></svg></button><button class="sb" disabled><svg><use href="#gflow"/></svg></button><button class="sb split"><svg><use href="#ab"/></svg></button><button class="sb"><svg><use href="#chk"/></svg></button><button class="sb" disabled><svg><use href="#unchk"/></svg></button><button class="sb"><svg><use href="#inv"/></svg></button><button class="sb last"><svg><use href="#del"/></svg></button></div>
      </div>
    </section>
    <div class="lcright">
      <div class="lctop">
        <section class="group"><h2><label for="lcno">LC <u>N</u>o.</label></h2><div class="gb"><input class="tb" id="lcno" value="1" disabled></div></section>
        <section class="group"><h2><label for="lcd">Load Case <u>D</u>escription</label></h2><div class="gb"><span class="cb2"><select id="lcd"><option>Design load</option></select></span></div></section>
        <section class="group"><h2><label for="solve">To <u>S</u>olve</label></h2><div class="gb"><input type="checkbox" id="solve" class="t6" checked></div></section>
      </div>
      <div class="tabs sub"><button class="tab">General</button><button class="tab on">Calculation Parameters</button></div>
      <div class="subpage">
        <div class="col">
          <section class="group"><h2>Method of Analysis</h2><div class="gb p10">
            <label class="ck t9"><input type="radio" name="an" checked><span><u>G</u>eometrically linear analysis</span></label>
            <label class="ck t10"><input type="radio" name="an"><span><u>S</u>econd-order analysis (P-Delta / P-delta)</span></label>
            <label class="ck t10"><input type="radio" name="an"><span><u>L</u>arge deformation analysis</span></label>
            <label class="ck t10"><input type="radio" name="an"><span><u>P</u>ostcritical analysis</span></label>
          </div></section>
          <section class="group"><h2>Method for Solving System of</h2><div class="gb p10">
            <p class="t9">Nonlinear algebraic equations:</p>
            <label class="ck t8"><input type="radio" name="sv" checked><span class="focus">Ne<u>w</u>ton-Raphson</span></label>
            <label class="ck t10"><input type="radio" name="sv"><span>Newton-<u>R</u>aphson combined with Picard</span></label>
            <label class="ck t10"><input type="radio" name="sv"><span>P<u>i</u>card</span></label>
            <label class="ck t10"><input type="radio" name="sv"><span>Newton-Raphson with <u>c</u>onstant stiffness matrix</span></label>
            <label class="ck t10"><input type="radio" name="sv"><span>Modified Newton-Rap<u>h</u>son</span></label>
            <label class="ck t10 off"><input type="radio" name="sv" disabled><span>Dynamic rela<u>x</u>ation</span></label>
          </div></section>
          <section class="group grow"><h2>Incrementally Increasing Loading</h2><div class="gb">
            <label class="ck t9"><input type="checkbox" checked><span>Activate</span></label>
            <div class="in20">
              <div class="row t6"><label for="k0">Ini<u>t</u>ial load factor</label><span class="sym">k<small>0</small> :</span><span class="val v135"><span class="spin s89"><input id="k0" value="10.000"><b><button></button><button></button></b></span>[-]</span></div>
              <div class="row t4"><label for="dk">Lo<u>a</u>d factor increment</label><span class="sym">Δ<small>k</small> :</span><span class="val v135"><span class="spin s89"><input id="dk" value="0.100"><b><button></button><button></button></b></span>[-]</span></div>
              <div class="row end t10"><label for="rf">Refinement of the last load<br>increment</label><span class="val v135"><span class="spin s53"><input id="rf" value="10"><b><button></button><button></button></b></span></span></div>
              <div class="row t18"><label class="ck"><input type="checkbox" checked><span>Stopping condition for:</span></label><span class="val v135"><span class="cb2 gray s89"><select aria-label="Stopping condition"><option>u</option></select></span></span></div>
              <div class="row t10"><label for="nn" class="in20">Node No:</label><span class="node"><span class="cb2 gray s70"><select id="nn"><option>Any</option></select></span><button class="sb"><svg><use href="#curs"/></svg></button></span><span class="val v135"><span class="spin s89"><input aria-label="Limit" value="500.0"><b><button></button><button></button></b></span>[mm]</span></div>
              <label class="ck t22"><input type="checkbox"><span>Use initial load (not increasing):</span></label>
              <span class="cb2 big t6 off"><select disabled aria-label="Initial load"><option></option></select></span>
            </div>
          </div></section>
        </div>
        <div class="col">
          <section class="group grow"><h2>Options</h2><div class="gb">
            <div class="row t8"><label class="ck"><input type="checkbox"><span>Modi<u>f</u>y loading by factor:</span></label><span class="val v124 off"><span class="spin s89"><input disabled aria-label="Factor"><b><button></button><button></button></b></span>[-]</span></div>
            <label class="ck t6 in20 off"><input type="checkbox" disabled><span>D<u>i</u>vide results by loading factor</span></label>
            <p class="t18">Activate stiffness factors of:</p>
            <label class="ck t8"><input type="checkbox"><span>Materials (partial factor γ<small>M</small>)</span></label>
            <label class="ck t10"><input type="checkbox" checked><span>Cross-sections (factor for J, I<small>y</small>, I<small>z</small>, A, A<small>y</small>, A<small>z</small>)</span></label>
            <label class="ck t10"><input type="checkbox" checked><span>Members (Definition Type)</span></label>
            <label class="ck t10"><input type="checkbox"><span>Surfaces (Definition Type)</span></label>
            <p class="t12">Activate special settings in tab:</p>
            <label class="ck t8"><input type="checkbox"><span><u>M</u>odify stiffness</span></label>
            <label class="ck t10"><input type="checkbox"><span><u>E</u>xtra options</span></label>
            <label class="ck t10"><input type="checkbox"><span>Deactivate</span></label>
            <label class="ck t18 off"><input type="checkbox" disabled checked><span><u>C</u>onsider favorable effects due to tension of members</span></label>
            <label class="ck t20 off"><input type="checkbox" disabled checked><span>R<u>e</u>fer internal forces to deformed<br>structure for:</span></label>
            <label class="ck t8 in20 off"><input type="checkbox" disabled checked><span class="em"><u>N</u>ormal forces N</span></label>
            <label class="ck t10 in20 off"><input type="checkbox" disabled checked><span class="em">Shear forces <u>V</u><small>y</small> and V<small>z</small></span></label>
            <label class="ck t10 in20 off"><input type="checkbox" disabled checked><span class="em"><u>M</u>oments M<small>y</small>, M<small>z</small> and M<small>T</small></span></label>
            <label class="ck t10 off"><input type="checkbox" disabled><span><u>T</u>ry to calculate kinematic mechanism<br>(add low stiffness in first iteration)</span></label>
            <div class="row t10"><label class="ck"><input type="checkbox"><span>Appl<u>y</u> separate number of load increments<br>for this load case:</span></label><span class="val v108 off"><span class="spin s53"><input disabled aria-label="Increments"><b><button></button><button></button></b></span></span></div>
            <label class="ck t10"><input type="checkbox" checked><span>Save the results of all load increments</span></label>
            <label class="ck t22"><input type="checkbox"><span>Deactivate nonlinearities for this load case</span></label>
          </div></section>
          <div class="strip"><button class="sb"><svg><use href="#bolt"/></svg></button></div>
        </div>
      </div>
    </div>
  </div>
  <footer><button class="sb"><svg><use href="#help"/></svg></button><button class="sb split2"><svg><use href="#fold"/></svg></button><button class="sb"><svg><use href="#savew"/></svg></button><span class="fill"></span><button class="pb def">OK</button><button class="pb">Cancel</button></footer>
  <i class="sizer"></i>
</section>

<div class="behind"></div>

<section class="dlg">
  <header><h1>Calculation Parameters</h1><button aria-label="Close"><svg><use href="#x"/></svg></button></header>
  <div class="tabs"><button class="tab">Load Cases</button><button class="tab">Load Combinations</button><button class="tab">Result Combinations</button><button class="tab on">Global Calculation Parameters</button><button class="tab">Calculation Diagrams</button></div>
  <div class="page calc">
    <section class="group"><h2>Settings</h2><div class="gb">
      <div class="row t6"><label for="a1">Maxim<u>u</u>m number of iterations:</label><span class="val v93"><span class="spin s61"><input id="a1" value="100"><b><button></button><button></button></b></span></span></div>
      <p class="t14">Number of load increments for</p>
      <div class="row t4"><label for="a2">- <u>L</u>oad cases:</label><span class="val v93"><span class="spin s61"><input id="a2" value="5"><b><button></button><button></button></b></span></span></div>
      <div class="row t2"><label for="a3">- L<u>o</u>ad combinations:</label><span class="val v93"><span class="spin s61"><input id="a3" value="5"><b><button></button><button></button></b></span></span></div>
      <div class="row t12"><label for="a4">Maximum number for incrementally<br>increasing loading:</label><span class="val v93"><span class="spin s61"><input id="a4" value="1000"><b><button></button><button></button></b></span></span></div>
      <p class="t12">Number of divisions of members for</p>
      <div class="row t6"><label for="a5">- <u>R</u>esult diagrams:</label><span class="val v93"><span class="spin s61"><input id="a5" value="10"><b><button></button><button></button></b></span></span></div>
      <div class="row end t4"><label for="a6" class="hang">- <u>S</u>pecial types of members<br>(cable, elastic foundation, taper,<br>nonlinearity):</label><span class="val v93"><span class="spin s61"><input id="a6" value="10"><b><button></button><button></button></b></span></span></div>
      <div class="row t4"><label for="a7">- Determination of ma<u>x</u>/min values:</label><span class="val v93"><span class="spin s61"><input id="a7" value="10"><b><button></button><button></button></b></span></span></div>
      <div class="row end t22"><label for="a8">Subdivisions of FE mesh for <u>g</u>raphical<br>results:</label><span class="val v93"><span class="spin s61"><input id="a8" value="0"><b><button></button><button></button></b></span></span></div>
      <div class="row end t20"><label for="a9"><u>P</u>ercentage of iterations of<br>Newton-Raphson method in combination<br>with Picard:</label><span class="val v93"><span class="spin s61"><input id="a9" value="5"><b><button></button><button></button></b></span>[%]</span></div>
    </div></section>
    <section class="group"><h2>Options</h2><div class="gb">
      <label class="ck t12"><input type="checkbox" checked><span>Activate shear stiffness of members<br>(cross-sectional areas A<small>y</small>, A<small>z</small>)</span></label>
      <label class="ck t8"><input type="checkbox" checked><span><u>A</u>ctivate member divisions for large deformation or<br>post-critical analysis, initial strain from other LC/CO</span></label>
      <label class="ck t8"><input type="checkbox" checked><span>Modify stiffness (material, cross-sections, members,<br>load cases and combinations)</span></label>
      <label class="ck t8"><input type="checkbox" checked><span>Consider extra options<br>(load cases and combinations)</span></label>
      <label class="ck t32"><input type="checkbox" checked><span>Check critical forces of members</span></label>
      <label class="ck t36"><input type="checkbox"><span>Nonsymmetric direct solver if demanded by nonlinear<br>model</span></label>
      <div class="row top t14"><span class="lab">Method for system of<br>equations:</span><span class="radios"><label class="ck"><input type="radio" name="ms" checked><span><u>D</u>irect</span></label><label class="ck"><input type="radio" name="ms"><span><u>I</u>terative</span></label></span></div>
      <div class="row top t12"><span class="lab">Plate bending theory:</span><span class="radios"><label class="ck"><input type="radio" name="pb" checked><span><u>M</u>indlin</span></label><label class="ck"><input type="radio" name="pb"><span><u>K</u>irchhoff</span></label></span></div>
      <div class="row top t12"><span class="lab">Solver version:</span><span class="radios"><label class="ck"><input type="radio" name="sr"><span><u>3</u>2-bit</span></label><label class="ck"><input type="radio" name="sr" checked><span><u>6</u>4-bit</span></label></span></div>
    </div></section>
    <section class="group"><h2>Precision and Tolerance</h2><div class="gb p10">
      <label class="ck t10"><input type="checkbox"><span>C<u>h</u>ange standard settings</span></label>
      <div class="in20 off em">
        <div class="row t12"><label for="b1">Precision of con<u>v</u>ergence<br>criteria of nonlinear<br>calculation:</label><span class="stack v213"><span class="black">[0.01 ... 100]</span><span class="spin s76"><input id="b1" disabled><b><button></button><button></button></b></span></span></div>
        <div class="row end t8"><label for="b2">Tolerance for detection of<br>instability:</label><span class="val v213"><span class="spin s76"><input id="b2" disabled><b><button></button><button></button></b></span></span></div>
        <div class="row end t8"><label for="b3">Relative setting of time step<br>for dynamic relaxation:</label><span class="val v213"><span class="spin s76"><input id="b3" disabled><b><button></button><button></button></b></span></span></div>
        <p class="right v213 t8">(Lower factor -&gt; more exact)</p>
        <div class="row end t20"><label for="b4">Robustness of iterative<br>calculation:</label><span class="stack near v213"><span>[1.00 ... 100]</span><span class="spin s76"><input id="b4" disabled><b><button></button><button></button></b></span></span></div>
        <div class="row t14"><span class="lab">Settings for cables and membranes...</span><button class="sb mr4" disabled><svg><use href="#gset"/></svg></button></div>
      </div>
      <label class="ck t26"><input type="checkbox"><span>Penalty stiffness associated with zero-energy modes for</span></label>
      <div class="in20 off em">
        <p class="right v213 t6">[0.01 ... 100]</p>
        <div class="row"><label for="b5">- Shell elements:</label><span class="val v213"><span class="spin s76"><input id="b5" disabled><b><button></button><button></button></b></span></span></div>
        <div class="row t4"><label for="b6">- Solid elements:</label><span class="val v213"><span class="spin s76"><input id="b6" disabled><b><button></button><button></button></b></span></span></div>
        <p class="right v213 t8">(Lower factor -&gt; smaller penalty)</p>
      </div>
    </div></section>
    <section class="group marked"><h2>Nonlinearities</h2><div class="gb p12">
      <p class="t8">Activate:</p>
      <label class="ck t8 off"><input type="checkbox" disabled><span><u>S</u>upports and elastic foundations</span></label>
      <label class="ck t10 off"><input type="checkbox" disabled><span><u>M</u>embers due to member type</span></label>
      <label class="ck t10 off"><input type="checkbox" disabled><span>Member hinges, releases</span></label>
      <label class="ck t10 off"><input type="checkbox" disabled><span>Member <u>n</u>onlinearities</span></label>
      <label class="ck t10 off"><input type="checkbox" disabled><span>Solids of type 'Contact'</span></label>
      <label class="ck t10"><input type="checkbox" checked><span>Materials with nonlinear model</span></label>
      <label class="ck t6 in16"><input type="checkbox"><span>Number of load increments for Newton-Raphson<br>method to determine automatically</span></label>
      <hr>
      <label class="ck t12 off"><input type="checkbox" disabled><span>Isotropic thermal-elastic material model</span></label>
    </div></section>
    <section class="group"><h2>Reactivation of Failing Members</h2><div class="gb">
      <label class="ck t8 off"><input type="checkbox" disabled checked><span><u>C</u>heck deformation of failing members and<br>reactivate where appropriate</span></label>
      <div class="row t4 in20 off em"><label for="c1">Ma<u>x</u>imum number of reactivations:</label><span class="val v93"><span class="spin s61"><input id="c1" value="3" disabled><b><button></button><button></button></b></span></span></div>
      <label class="ck t26 off"><input type="checkbox" disabled><span><u>E</u>xceptional handling</span></label>
      <label class="ck t10 in20 off"><input type="radio" name="ex" disabled><span><u>F</u>ailing members to be removed individually<br>during successive iterations</span></label>
      <label class="ck t18 in20 off"><input type="radio" name="ex" disabled checked><span>Assign reduced stiffness to failing members</span></label>
      <div class="row t14 in40 off em"><label for="c2">Reduc<u>t</u>ion factor of stiffness:</label><span class="val v93"><span class="spin s76"><input id="c2" value="1000" disabled><b><button></button><button></button></b></span></span></div>
    </div></section>
    <div class="col pipe">
      <section class="group grow"><h2>Pipe Internal Pressure</h2><div class="gb">
        <label class="ck t8"><input type="checkbox"><span>Displacements due to member loads of type 'Pipe internal<br>pressure' (<u>B</u>ourdon effect)</span></label>
      </div></section>
      <div class="strip tall"><button class="sb"><svg><use href="#db1"/></svg></button><button class="sb"><svg><use href="#db2"/></svg></button></div>
    </div>
  </div>
  <footer><button class="sb"><svg><use href="#help"/></svg></button><button class="sb split2"><svg><use href="#fold"/></svg></button><button class="sb"><svg><use href="#savew"/></svg></button><span class="fill"></span><button class="pb def">OK</button><button class="pb">Cancel</button></footer>
  <i class="sizer"></i>
</section>
<svg class="arrow"><path d="M1150 592L690 434" stroke="#c00000" stroke-width="6" fill="none"/><path d="M673 427l28-5-9 25z" fill="#c00000"/></svg>
</div>
</main>
</body>
</html>
```
FILE: styles.css
```css
* { box-sizing: border-box; }
body { margin: 0; background: #fff; font: 12px/16px "Noto Sans", sans-serif; color: #000; }
button, input, select { font: inherit; color: inherit; margin: 0; padding: 0; border-radius: 0; }
h1, h2, p, ul { margin: 0; padding: 0; font-weight: normal; }
li { list-style: none; }
u { text-underline-offset: 2px; }
small { font-size: 10px; }
.defs { display: none; }

/* main window */
.app { margin-right: 363px; font: 14px/20px "Open Sans", sans-serif; }
.appbar { display: flex; align-items: center; height: 29px; }
.ic { width: 20px; height: 20px; flex: none; }
.appbar .ic { margin: 0 5px 0 2px; }
.sys { margin-left: auto; display: flex; gap: 46px; padding-right: 25px; }
.sys button { width: 12px; height: 12px; border: 0; background: none; }
.sys svg { display: block; width: 12px; height: 12px; }
.menu { display: flex; align-items: center; height: 30px; background: #cfd4de; padding-left: 2px; color: #444b58; }
.menu .ic { margin-right: 11px; }
.menu a { color: inherit; text-decoration: none; margin-right: 14px; font: 13px/20px "Noto Sans", sans-serif; }
.mdi { margin-left: auto; display: flex; gap: 9px; padding-right: 5px; }
.mdi svg { width: 12px; height: 12px; }
.grip { flex: none; width: 3px; height: 20px; margin-right: 5px; background: repeating-linear-gradient(#9aa1b0 0 2px, transparent 2px 4px) 0 0/2px 100% no-repeat; }
.bars { background: #cfd4de; border-bottom: 2px solid #6b6e76; }
.bar { display: flex; height: 32px; gap: 2px; }
.seg { display: flex; align-items: center; padding: 0 2px 0 1px; background: linear-gradient(#eaeef6, #dde2ec 55%, #cdd2df); border-bottom: 1px solid #a7abb8; border-radius: 0 4px 4px 0; }
.ib { flex: none; width: 28px; height: 27px; border: 1px solid transparent; background: none; display: flex; align-items: center; justify-content: center; border-radius: 2px; }
.ib svg { width: 20px; height: 20px; }
.ib.on { background: linear-gradient(#fbd08c, #f9b55a 50%, #fde08a); border-color: #9a8250; }
.ib.dim { opacity: .45; }
.sep { flex: none; width: 1px; height: 20px; background: #a4a9b6; margin: 0 4px 0 3px; }
.dd { flex: none; width: 15px; height: 20px; display: flex; align-items: center; justify-content: center; }
.dd::before { content: ""; border: 4px solid transparent; border-top: 5px solid #5b6270; border-bottom: 0; }
.lcbox { position: relative; width: 216px; margin: 0 2px; }
.lcbox select { appearance: none; width: 100%; height: 22px; border: 1px solid #fff; background: #fff; padding: 0 3px; font: 13px/20px "Noto Sans", sans-serif; }
.lcbox::after { content: ""; position: absolute; right: 1px; top: 1px; width: 18px; height: 20px; background: #777; clip-path: polygon(30% 44%, 70% 44%, 50% 62%); pointer-events: none; }
.lcbox::before { content: ""; position: absolute; right: 1px; top: 1px; width: 18px; height: 20px; background: #e3e7ef; pointer-events: none; }
.work { display: flex; height: 186px; overflow: hidden; }
.nav { width: 534px; flex: none; background: #e7ebf4; }
.navhead { display: flex; align-items: center; height: 26px; padding: 0 6px 1px 4px; gap: 8px; color: #4a4f5a; border-bottom: 1px solid #a5aab8; }
.navhead span { flex: 1; font: 13px/20px "Noto Sans", sans-serif; }
.navhead svg { width: 12px; height: 12px; }
.treebox { display: flex; margin: 4px 3px 0; background: #fcfaf1; border: 1px solid #777b85; border-bottom: 0; height: 156px; overflow: hidden; }
.tree { flex: 1; padding-left: 6px; }
.tree li > div { display: flex; align-items: center; height: 22px; gap: 4px; white-space: nowrap; }
.tree svg { width: 14px; height: 14px; flex: none; }
.tree .ex + svg { margin-left: 3px; }
.tree ul { margin-left: 19px; background: repeating-linear-gradient(#777 0 1px, transparent 1px 3px) 5px 0/1px 100% no-repeat; }
.tree ul ul ul { background-size: 1px 34px; }
.ex { position: relative; flex: none; width: 11px; height: 11px; border: 1px solid #8a8a8a; background: linear-gradient(#2a3c8c, #2a3c8c) 50% 50%/7px 1px no-repeat #fff; }
.ex.plus::after { content: ""; position: absolute; left: 4px; top: 1px; width: 1px; height: 7px; background: #2a3c8c; }
.twig { width: 8px; height: 1px; margin-left: 5px; border-top: 1px dotted #777; }
.cur { color: #3b3bf0; }
.vscroll { width: 19px; background: #f0f0f0; display: flex; flex-direction: column; align-items: center; }
.vscroll svg { width: 14px; height: 28px; }
.vscroll i { flex: 1; width: 19px; background: #cdcdcd; }
.view { position: relative; flex: 1; min-width: 0; margin-left: 5px; border-left: 1px solid #555; border-right: 1px solid #ccc; box-shadow: -6px 0 #cfd4de; }
.scene { display: block; width: 100%; height: 187px; }
.view p { position: absolute; left: 4px; top: 5px; font: 11px/14px "Liberation Sans", sans-serif; }
.loadval { font: 10px "Liberation Sans", sans-serif; fill: #000080; }

/* dialogs */
.dialogs { position: relative; display: flex; padding: 0 6px 5px; background: linear-gradient(#dfe3ec, #dfe3ec) 0 0/4px 720px no-repeat; }
.dlg { position: relative; flex: 1; min-width: 0; background: #f0f0f0; border: 1px solid #555; display: flex; flex-direction: column; }
.behind { width: 5px; background: linear-gradient(#8a8af0 0 20px, #5a54e0 20px 225px, #8a88e0 225px 280px, #fff 280px 385px, #b8bfcc 385px 440px, #fff 440px); }
.dlg header { display: flex; align-items: center; justify-content: space-between; height: 37px; background: #fff; padding: 0 15px 0 8px; }
.dlg h1 { font: 14px/20px "Open Sans", sans-serif; }
.dlg header button { border: 0; background: none; width: 12px; height: 12px; }
.dlg header svg { display: block; width: 12px; height: 12px; }
.tabs { display: flex; align-items: flex-end; padding: 8px 6px 0; position: relative; z-index: 1; margin-bottom: -1px; }
.tab { height: 22px; border: 1px solid #d9d9d9; border-left: 0; background: #f0f0f0; padding: 0 5px; white-space: nowrap; }
.tab:first-child { border-left: 1px solid #d9d9d9; }
.tab.on { height: 24px; background: #fff; border-bottom-color: #fff; padding: 0 8px 3px; border-left: 1px solid #d9d9d9; }
.page { margin: 0 9px 0 6px; background: #fff; border: 1px solid #d9d9d9; padding: 11px 7px 11px 8px; display: grid; }
.lc { grid-template-columns: 314fr 774fr; column-gap: 10px; }
.calc { grid-template-columns: 342fr 334fr 409fr; gap: 10px 9px; margin-right: 4px; padding-bottom: 14px; }
.group { position: relative; display: flex; flex-direction: column; min-width: 0; }
.group h2 { font: 14px/18px "Liberation Sans", sans-serif; height: 19px; color: #1f4670; background: #dce6f4; padding-left: 3px; border-bottom: 1px solid #fff; clip-path: polygon(0 0, calc(100% - 12px) 0, 100% 12px, 100% 100%, 0 100%); white-space: nowrap; }
.gb { flex: 1; display: flex; flex-direction: column; background: #f0f4f9; border: 1px solid #a5a5ea; border-top: 0; border-left-color: #dce6f4; padding: 0 0 0 3px; }
.col { display: flex; flex-direction: column; gap: 13px; min-width: 0; }
.grow { flex: 1; }
.p10 { padding-bottom: 10px; }
.p12 { padding-bottom: 11px; }

.existing .gb { padding: 1px 3px 4px 0; }
.lclist { flex: 1; display: flex; background: #fff; border: 1px solid #888; border-right: 0; border-bottom: 0; }
.lclist table { width: 100%; border-collapse: collapse; }
.lclist td { padding: 0 4px; }
.lclist .c1 { width: 98px; padding: 0; border-right: 1px solid #000; }
.lclist tr.cur { height: 24px; background: #0078d7; color: #fff; }
.lclist tr.cur .c1 { border-right-color: #fff; }
.c1 span { display: inline-block; width: 26px; line-height: 11px; background: #000; text-align: center; font-size: 10px; margin-right: 4px; }
.hscroll { display: flex; align-items: center; height: 20px; background: #f0f0f0; }
.hscroll svg { width: 21px; height: 14px; }
.hscroll i { width: 128px; height: 20px; background: #cdcdcd; margin-right: auto; }
.ltools { display: flex; gap: 5px; padding: 7px 0 0 3px; }
.split { margin-right: 6px; }
.last { margin-left: auto; }
.sb { flex: none; width: 30px; height: 26px; border: 1px solid #a9a9a9; background: #e2e2e2; display: flex; align-items: center; justify-content: center; }
.sb:disabled { background: #ccc; border-color: #bfbfbf; }
.sb svg { width: 20px; height: 20px; }
.mr4 { margin-right: 4px; }

.lcright { display: flex; flex-direction: column; min-width: 0; }
.lctop { display: grid; grid-template-columns: 114fr 453fr 189fr; gap: 9px; }
.lctop .gb { padding: 5px 4px 6px 3px; min-height: 36px; }
.tb { width: 54px; height: 24px; border: 1px solid #c8c8c8; background: #fff; color: #777; text-align: right; padding-right: 7px; }
.tabs.sub { padding: 10px 0 0 1px; margin: 0; }
.subpage { display: grid; grid-template-columns: 369fr 383fr; gap: 9px; border-left: 1px solid #888; border-right: 3px double #ddd; border-bottom: 1px solid #ddd; padding: 12px 5px 7px 4px; }
.subpage .col:last-child { gap: 5px; }

.ck { display: flex; align-items: flex-start; gap: 4px; white-space: nowrap; }
.ck span { min-height: 16px; }
input[type=checkbox], input[type=radio] { appearance: none; flex: none; width: 16px; height: 16px; border: 1px solid #333; background: #fff 50% 50%/14px 14px no-repeat; }
input[type=radio] { border-radius: 50%; }
input[type=checkbox]:checked { background-image: url("data:image/svg+xml,%3Csvg xmlns='http://www.w3.org/2000/svg' viewBox='0 0 14 14'%3E%3Cpath d='M2 7l3 4 7-8' fill='none' stroke='%23333' stroke-width='1.5'/%3E%3C/svg%3E"); }
input[type=radio]:checked { background-image: radial-gradient(circle, #333 0 4px, transparent 5px); }
input[type=checkbox]:disabled, input[type=radio]:disabled { border-color: #c4c4c4; }
input[type=checkbox]:disabled:checked { background-image: url("data:image/svg+xml,%3Csvg xmlns='http://www.w3.org/2000/svg' viewBox='0 0 14 14'%3E%3Cpath d='M2 7l3 4 7-8' fill='none' stroke='%23b8b8b8' stroke-width='1.5'/%3E%3C/svg%3E"); }
input[type=radio]:disabled:checked { background-image: radial-gradient(circle, #c8c8c8 0 4px, transparent 5px); }
.off { color: #777; }
.em { color: #a3a3a3; text-shadow: 1px 1px #fff; }
.black { color: #000; text-shadow: none; }
.focus { outline: 1px dotted #000; }
.row { display: flex; align-items: center; white-space: nowrap; }
.row > label, .lab { flex: 1; min-width: 0; }
.row.end { align-items: flex-end; }
.row.top { align-items: flex-start; }
.val { flex: none; display: flex; align-items: center; gap: 5px; }
.stack { flex: none; display: flex; flex-direction: column; gap: 8px; }
.near { gap: 4px; }
.sym { width: 28px; font-size: 14px; }
.radios { flex: none; width: 183px; display: flex; flex-direction: column; gap: 6px; }
.right { margin-left: auto; }
.hang { padding-left: 9px; text-indent: -9px; }
.node { flex: none; display: flex; gap: 4px; margin-right: 11px; }
.v93 { width: 93px; }
.v108 { width: 108px; }
.v124 { width: 124px; }
.v135 { width: 135px; }
.v213 { width: 213px; }
.s53 { width: 53px; }
.s61 { width: 61px; }
.s70 { width: 70px; }
.s76 { width: 76px; }
.s89 { width: 89px; }
.spin { display: flex; height: 24px; border: 1px solid #777; background: #fff; }
.spin input { flex: 1; min-width: 0; border: 0; background: none; text-align: right; padding-right: 4px; text-shadow: none; }
.spin b { width: 21px; display: flex; flex-direction: column; padding: 1px; gap: 1px; background: #b4b4b4; }
.spin button { flex: 1; border: 0; background: #f0f0f0; display: flex; align-items: center; justify-content: center; }
.spin button::before { content: ""; border: 4px solid transparent; border-bottom: 5px solid #000; border-top: 0; }
.spin button + button::before { border-top: 5px solid #000; border-bottom: 0; }
.off .spin { border-color: #c4c4c4; color: #777; }
.off .spin b { background: #ccc; }
.off .spin button::before { border-bottom-color: #666; }
.off .spin button + button::before { border-top-color: #666; }
.cb2 { position: relative; display: block; }
.cb2 select { appearance: none; display: block; width: 100%; height: 24px; border: 1px solid #777; background: #fff; padding: 0 5px; }
.cb2.gray select { background: #e2e2e2; border-color: #a9a9a9; padding: 0 3px; }
.cb2::after { content: ""; position: absolute; right: 8px; top: 7px; width: 6px; height: 6px; border: solid #444; border-width: 0 1px 1px 0; transform: rotate(45deg); }
.cb2.big { margin-right: 4px; }
.cb2.big select { height: 29px; border: 1px solid #c8c8c8; background: linear-gradient(#d8d8d8, #d8d8d8) 3px 9px/25px 11px no-repeat, linear-gradient(#f0f0f0, #f0f0f0) 2px 2px/calc(100% - 26px) 23px no-repeat, #fff; }
.cb2.big::after { top: 9px; border-color: #aaa; }
hr { width: 284px; border: 0; border-top: 1px solid #999; margin: 16px 0 0 3px; }
.in16 { margin-left: 17px; }
.in20 { margin-left: 20px; }
.in40 { margin-left: 38px; }
.t2 { margin-top: 2px; }
.t4 { margin-top: 4px; }
.t6 { margin-top: 6px; }
.t8 { margin-top: 8px; }
.t9 { margin-top: 9px; }
.t10 { margin-top: 10px; }
.t12 { margin-top: 12px; }
.t14 { margin-top: 14px; }
.t18 { margin-top: 18px; }
.t20 { margin-top: 20px; }
.t22 { margin-top: 22px; }
.t26 { margin-top: 26px; }
.t32 { margin-top: 32px; }
.t36 { margin-top: 36px; }
.strip { display: flex; justify-content: flex-end; align-items: center; gap: 6px; height: 30px; padding-right: 3px; background: #f0f4f9; border: 1px solid #a5a5ea; border-top-color: #dce6f4; border-left-color: #dce6f4; }
.strip.tall { height: 36px; }
.dlg footer { display: flex; align-items: center; gap: 5px; padding: 12px 8px 10px 6px; margin: auto -2px 0 0; }
.split2 { margin-left: 5px; }
.fill { flex: 1; }
.pb { width: 87px; height: 26px; border: 1px solid #a9a9a9; background: #e2e2e2; }
.pb.def { border: 2px solid #0078d7; margin-right: 5px; }
.sizer { position: absolute; right: 0; bottom: 0; width: 13px; height: 13px; background: repeating-linear-gradient(135deg, #999 0 2px, #f0f0f0 2px 4px); clip-path: polygon(100% 0, 100% 100%, 0 100%); }
.marked::after { content: ""; position: absolute; inset: -8px -5px -6px -8px; border: 3px solid #c00000; filter: drop-shadow(3px 4px 3px rgba(0, 0, 0, .5)); pointer-events: none; }
.arrow { position: absolute; inset: 0; width: 100%; height: 100%; pointer-events: none; filter: drop-shadow(2px 4px 2px rgba(0, 0, 0, .5)); }
```
